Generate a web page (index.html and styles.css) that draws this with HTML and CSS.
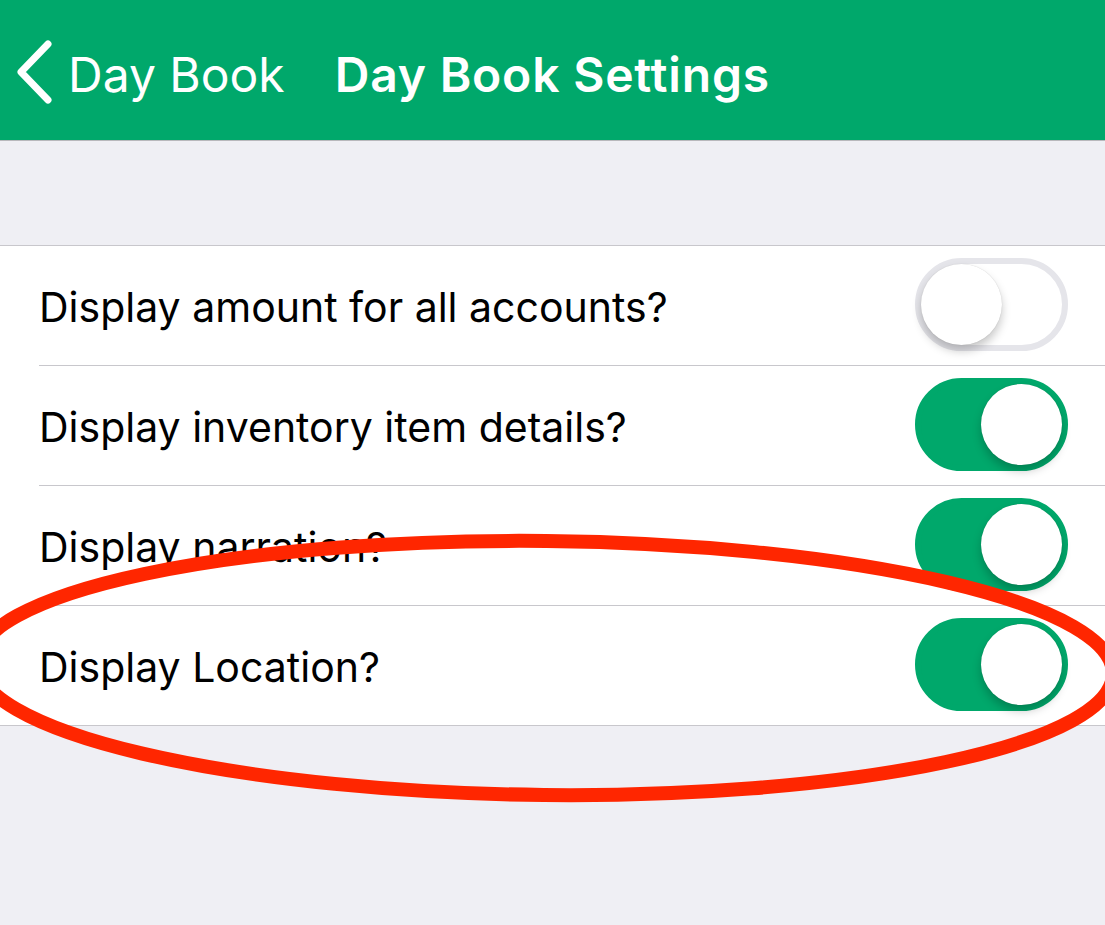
FILE: index.html
```html
<!DOCTYPE html>
<html>
<head>
<meta charset="utf-8">
<link rel="stylesheet" href="styles.css">
</head>
<body>
<header class="navbar">
  <div class="back">
    <svg class="chevron" width="38" height="64" viewBox="0 0 38 64"><path d="M33 4 L6 32 L33 60" fill="none" stroke="#fff" stroke-width="7" stroke-linecap="round" stroke-linejoin="round"/></svg>
    <span class="back-label">Day Book</span>
  </div>
  <h1 class="title">Day Book Settings</h1>
</header>
<main class="content">
  <ul class="group">
    <li class="row"><span class="label">Display amount for all accounts?</span><span class="toggle"><span class="knob"></span></span></li>
    <li class="row"><span class="label">Display inventory item details?</span><span class="toggle on"><span class="knob"></span></span></li>
    <li class="row"><span class="label">Display narration?</span><span class="toggle on"><span class="knob"></span></span></li>
    <li class="row"><span class="label">Display Location?</span><span class="toggle on"><span class="knob"></span></span></li>
  </ul>
</main>
<svg class="annotation" width="1105" height="925" viewBox="0 0 1105 925"><ellipse cx="545" cy="668" rx="568" ry="127" fill="none" stroke="#ff2600" stroke-width="14" transform="rotate(0.6 545 668)"/></svg>
</body>
</html>
```
FILE: styles.css
```css
* { box-sizing: border-box; }
html, body { margin: 0; padding: 0; }
body {
  width: 1105px;
  height: 925px;
  overflow: hidden;
  background: #efeff4;
  font-family: Inter, "Noto Sans", sans-serif;
  position: relative;
}
.navbar {
  height: 141px;
  background: #00a86b;
  border-bottom: 1px solid #b8b8bc;
  display: flex;
  align-items: center;
  padding-left: 15px;
  padding-top: 8px;
  color: #fff;
}
.back {
  display: flex;
  align-items: center;
  gap: 15px;
}
.chevron { display: block; margin-top: -4px; }
.back-label {
  font-size: 48px;
  font-weight: 400;
}
.title {
  margin: 0 0 0 50px;
  font-size: 48px;
  font-weight: 600;
  letter-spacing: 0.8px;
}
.content { padding-top: 104px; }
.group {
  list-style: none;
  margin: 0;
  padding: 0;
  background: #fff;
  border-top: 1px solid #c8c7cc;
  border-bottom: 1px solid #c8c7cc;
}
.row {
  height: 120px;
  margin-left: 39px;
  padding-right: 37px;
  display: flex;
  align-items: center;
  justify-content: space-between;
  border-bottom: 1px solid #c8c7cc;
}
.row:last-child { border-bottom: none; height: 119px; }
.label {
  font-size: 41px;
  color: #000;
  padding-top: 2px;
}
.toggle {
  width: 153px;
  height: 93px;
  border-radius: 47px;
  border: 6px solid #e5e5ea;
  background: #fff;
  display: flex;
  align-items: center;
  margin-top: -2px;
}
.knob {
  width: 81px;
  height: 81px;
  border-radius: 50%;
  background: #fff;
  box-shadow: 0 6px 10px rgba(0,0,0,0.22), 0 0 1px rgba(0,0,0,0.2);
}
.toggle.on {
  background: #00a86b;
  border-color: #00a86b;
  justify-content: flex-end;
}
.annotation {
  position: absolute;
  left: 0;
  top: 0;
  pointer-events: none;
}
```
